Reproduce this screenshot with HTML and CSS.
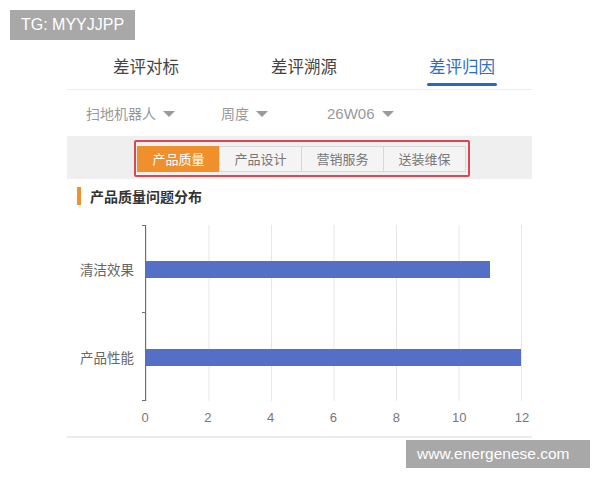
FILE: index.html
```html
<!DOCTYPE html>
<html lang="zh">
<head>
<meta charset="utf-8">
<title>差评归因</title>
<link rel="stylesheet" href="styles.css">
</head>
<body>
<div class="wm wm-top">TG: MYYJJPP</div>
<div class="app">
  <div class="tabs">
    <div class="tab"><span>差评对标</span><i class="uline"></i></div>
    <div class="tab"><span>差评溯源</span><i class="uline"></i></div>
    <div class="tab active"><span>差评归因</span><i class="uline"></i></div>
  </div>
  <div class="filters">
    <div class="filter">扫地机器人<i class="caret"></i></div>
    <div class="filter">周度<i class="caret"></i></div>
    <div class="filter num">26W06<i class="caret"></i></div>
  </div>
  <div class="strip">
    <div class="seg">
      <div class="btn active">产品质量</div>
      <div class="btn">产品设计</div>
      <div class="btn">营销服务</div>
      <div class="btn">送装维保</div>
    </div>
  </div>
  <div class="title"><i class="mark"></i><span>产品质量问题分布</span></div>
  <div class="chart">
    <div class="cat r1">清洁效果</div>
    <div class="cat r2">产品性能</div>
    <div class="tick t1"></div>
    <div class="tick t2"></div>
    <div class="plot">
      <div class="band"><div class="bar" style="width:91.67%"></div></div>
      <div class="band"><div class="bar" style="width:100%"></div></div>
    </div>
    <div class="xlabels">
      <span>0</span><span>2</span><span>4</span><span>6</span><span>8</span><span>10</span><span>12</span>
    </div>
  </div>
  <div class="bottom-line"></div>
</div>
<div class="wm wm-bottom">www.energenese.com</div>
</body>
</html>
```
FILE: styles.css
```css
* { box-sizing: border-box; }
html, body { margin: 0; padding: 0; }
body {
  width: 600px;
  height: 480px;
  position: relative;
  background: #fff;
  font-family: "Liberation Sans", "Noto Sans CJK SC", sans-serif;
  overflow: hidden;
}
.wm {
  position: absolute;
  background: #a8a8a8;
  color: #fff;
  white-space: nowrap;
}
.wm-top {
  left: 10px; top: 10px;
  width: 125px; height: 30px;
  line-height: 30px;
  padding-left: 11px;
  font-size: 16px;
}
.wm-bottom {
  left: 406px; top: 440px;
  width: 184px; height: 28px;
  line-height: 28px;
  padding-left: 11px;
  font-size: 15.5px;
}
.app {
  margin-left: 67px;
  width: 465px;
  padding-top: 45px;
}
.tabs {
  display: grid;
  grid-template-columns: 158px 158px 158px;
  width: 465px;
  border-bottom: 1px solid #ededed;
}
.tab {
  display: flex;
  flex-direction: column;
  align-items: center;
  padding-top: 10px;
  padding-bottom: 3px;
  font-family: "Noto Sans CJK SC", sans-serif;
  font-size: 16.5px;
  line-height: 22px;
  color: #444;
}
.uline {
  display: block;
  width: 70px;
  height: 3px;
  margin-top: 6px;
  border-radius: 2px;
  background: transparent;
}
.tab.active { color: #2f6fc1; }
.tab.active .uline { background: #2a68c0; }
.filters {
  display: grid;
  grid-template-columns: 135px 106px auto;
  height: 46px;
  align-items: center;
  padding-left: 19px;
}
.filter {
  display: flex;
  align-items: center;
  gap: 7px;
  font-family: "Noto Sans CJK SC", sans-serif;
  font-size: 14px;
  color: #999;
}
.filter.num {
  font-family: "Liberation Sans", sans-serif;
  font-size: 15px;
}
.caret {
  display: block;
  width: 0; height: 0;
  border-left: 6px solid transparent;
  border-right: 6px solid transparent;
  border-top: 6px solid #9a9a9a;
  margin-top: 2px;
}
.strip {
  background: #efefef;
  height: 43px;
  padding-top: 4px;
  padding-left: 67px;
}
.seg {
  display: inline-flex;
  border: 2px solid #d9474f;
  border-radius: 2px;
  padding: 4px 2px 3px 1px;
  background: #f0f0f0;
}
.btn {
  width: 83px;
  height: 26px;
  line-height: 24px;
  text-align: center;
  font-family: "Noto Sans CJK SC", sans-serif;
  font-size: 13px;
  color: #777;
  background: #f4f4f4;
  border: 1px solid #d8d8d8;
  margin-left: -1px;
}
.btn:first-child { margin-left: 0; }
.btn.active {
  background: #f0902c;
  border-color: #f0902c;
  color: #fff;
}
.title {
  display: flex;
  align-items: center;
  gap: 9px;
  margin-top: 8px;
  height: 18px;
  padding-left: 10px;
  font-family: "Noto Sans CJK SC", sans-serif;
  font-size: 14px;
  font-weight: bold;
  color: #333;
}
.mark {
  display: block;
  width: 4px;
  height: 18px;
  background: #f0912c;
}
.chart {
  display: grid;
  grid-template-columns: 75px 3px 377px;
  grid-template-rows: 88px 88px auto;
  margin-top: 20px;
}
.cat {
  grid-column: 1;
  display: flex;
  align-items: center;
  justify-content: flex-end;
  padding-right: 8px;
  font-family: "Noto Sans CJK SC", sans-serif;
  font-size: 13.5px;
  color: #666;
}
.cat.r1 { grid-row: 1; }
.cat.r2 { grid-row: 2; }
.tick { grid-column: 2; border-bottom: 1px solid #6e7079; }
.tick.t1 { grid-row: 1; border-top: 1px solid #6e7079; }
.tick.t2 { grid-row: 2; }
.plot {
  grid-column: 3;
  grid-row: 1 / span 2;
  display: grid;
  grid-template-rows: 88px 88px;
  border-left: 1px solid #6e7079;
  border-right: 1px solid #e6e6e6;
  background-image: linear-gradient(to right, #e6e6e6 1px, transparent 1px);
  background-size: calc(100% / 6) 100%;
  background-repeat: repeat-x;
}
.band {
  display: flex;
  align-items: center;
}
.bar {
  height: 17px;
  background: #5470c6;
}
.xlabels {
  grid-column: 3;
  grid-row: 3;
  display: flex;
  justify-content: space-between;
  width: 397px;
  margin-left: -10px;
  padding-top: 9px;
  font-size: 13px;
  line-height: 16px;
  color: #777;
}
.xlabels span { width: 20px; text-align: center; }
.bottom-line {
  margin-top: 10px;
  height: 2px;
  background: #ececec;
}
```
